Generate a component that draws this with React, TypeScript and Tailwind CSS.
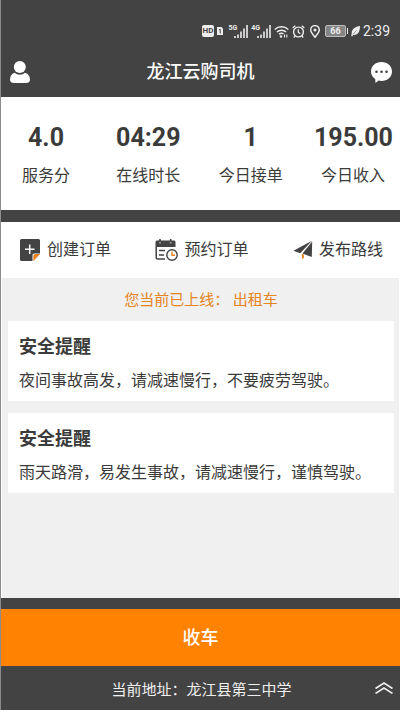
const stats = [
	{ label: "服务分", value: "4.0" },
	{ label: "在线时长", value: "04:29" },
	{ label: "今日接单", value: "1" },
	{ label: "今日收入", value: "195.00" },
];

const actions = [
	{ label: "创建订单", icon: CreateIcon },
	{ label: "预约订单", icon: BookingIcon },
	{ label: "发布路线", icon: RouteIcon },
];

const notices = [
	{ title: "安全提醒", text: "夜间事故高发，请减速慢行，不要疲劳驾驶。" },
	{ title: "安全提醒", text: "雨天路滑，易发生事故，请减速慢行，谨慎驾驶。" },
];

function CreateIcon() {
	return (
		<svg className="mr-[7px] h-[22px] w-5" viewBox="0 0 20 22" aria-hidden="true">
			<path d="M1.5 0h17A1.5 1.5 0 0 1 20 1.5V15l-6.500 7H1.5A1.5 1.5 0 0 1 0 20.5v-19A1.5 1.5 0 0 1 1.5 0Z" fill="#434343" />
			<path d="M12.500 22v-6a1.500 1.500 0 0 1 1.500-1.500h6V15l-6.500 7Z" fill="#fff" />
			<path d="M13.300 22v-5a2 2 0 0 1 2-2H20Z" fill="#e8811d" />
			<path d="M9.700 5.500V15M5 10.200h9.500" stroke="#fff" strokeWidth="1.5" />
		</svg>
	);
}

function BookingIcon() {
	return (
		<svg className="mr-[6px] h-[22px] w-[23px]" viewBox="0 0 23 22" aria-hidden="true">
			<path d="M2 1.5h17A1.5 1.5 0 0 1 20.5 3v5H.5V3A1.5 1.5 0 0 1 2 1.5Z" fill="#434343" />
			<path d="M5 0v3.5M15.700 0v3.500" stroke="#434343" strokeWidth="1.6" />
			<path d="M4 3.800h2M14.700 3.800h2" stroke="#fff" strokeWidth="0.7" />
			<path d="M1.2 8v10.5A1.5 1.5 0 0 0 2.700 20H10" fill="none" stroke="#434343" strokeWidth="1.5" />
			<path d="M4 11.500h6M4 16h5" stroke="#434343" strokeWidth="1.4" />
			<circle cx="17" cy="16" r="5.2" fill="#fff" stroke="#434343" strokeWidth="1.4" />
			<path d="M17 12.800v3.400h3" fill="none" stroke="#e8811d" strokeWidth="1.4" />
		</svg>
	);
}

function RouteIcon() {
	return (
		<svg className="mr-[6px] h-5 w-5" viewBox="0 0 20 20" aria-hidden="true">
			<path d="M19 .700.500 10.700l6.700 2.500Z" fill="#434343" />
			<path d="M19.200 1.500 9.500 13.600l9.300 3.300Z" fill="#434343" />
			<path d="M8.700 13.800l2.200.800v3.200l-1.800 1.500Z" fill="#e8811d" />
		</svg>
	);
}

function Signal({ label }: { label: string }) {
	return (
		<div className="flex h-[13px] items-start">
			<span className="text-[7px] leading-[7px] font-bold">{label}</span>
			<svg className="-ml-[3px] h-[13px] w-[14px]" viewBox="0 0 14 13" aria-hidden="true">
				<path
					d="M1 13v-2M4 13V9.500M7 13V6.500M10 13V3.500M13 13V0"
					stroke="currentColor"
					strokeWidth="1.6"
				/>
			</svg>
		</div>
	);
}

function StatusBar() {
	return (
		<div className="flex h-8 items-center justify-end gap-[3px] pr-[10px] text-[#ededed]">
			<span className="rounded-xs bg-[#ededed] px-px text-[8px] leading-3 font-bold text-[#434343]">
				HD
			</span>
			<svg className="mr-[2px] h-2 w-[6px]" viewBox="0 0 6 8" aria-hidden="true">
				<path d="M0 0h4.500L6 1.500V8H0Z" fill="currentColor" />
				<path d="M2 3l1.200-.800V6.500" fill="none" stroke="#434343" />
			</svg>
			<Signal label="5G" />
			<Signal label="4G" />
			<svg className="h-[13px] w-[15px]" viewBox="0 0 15 13" fill="none" stroke="currentColor" aria-hidden="true">
				<path d="M.700 4.500a10 10 0 0 1 13.600 0M2.900 7a7 7 0 0 1 9.200 0M5 9.300a4 4 0 0 1 4.500-.500" strokeWidth="1.5" />
				<circle cx="7" cy="11.500" r="1.2" fill="currentColor" stroke="none" />
				<path d="M10.500 9.500v3M12.800 9.500v3" strokeWidth="1.1" />
			</svg>
			<svg className="h-[13px] w-[13px]" viewBox="0 0 13 13" fill="none" stroke="currentColor" aria-hidden="true">
				<circle cx="6.500" cy="7" r="4.900" strokeWidth="1.4" />
				<path d="M6.300 4.200v3l2 1.600M.700 3 3.300.700M12.300 3 9.700.700M3 11l-1.200 1.500M10 11l1.200 1.500" strokeWidth="1.3" />
			</svg>
			<svg className="mx-[2px] h-[13px] w-[10px]" viewBox="0 0 10 13" aria-hidden="true">
				<path d="M5 12.300C3.500 10 .700 7.500.700 4.900a4.300 4.300 0 0 1 8.600 0C9.300 7.500 6.500 10 5 12.300Z" fill="none" stroke="currentColor" strokeWidth="1.4" />
				<circle cx="5" cy="5" r="1.5" fill="currentColor" />
			</svg>
			<div className="flex items-center">
				<span className="h-3 w-[21px] rounded-xs border border-[#bdbdbd] bg-[#858585] text-center text-[9px] leading-[10px] font-bold">
					66
				</span>
				<span className="ml-px h-[6px] w-px bg-[#ededed]" />
			</div>
			<svg className="h-[11px] w-[9px]" viewBox="0 0 9 11" aria-hidden="true">
				<path d="M9 0C4.500.800.500 3 .700 7.300L.200 10l1 .500 1-1.500C7 9.500 9 5.500 9 0Z" fill="currentColor" />
				<path d="M1.800 8.500 5.500 4.500" stroke="#434343" strokeWidth="0.5" />
			</svg>
			<time className="text-sm">2:39</time>
		</div>
	);
}

export default function App() {
	return (
		<div className="flex min-h-screen flex-col border-l border-[#8c8c8c] bg-[#434343] font-['Roboto','Noto_Sans_CJK_SC',sans-serif] text-[#3b3b3b]">
			<header className="pt-[15px] text-white">
				<StatusBar />
				<div className="flex h-[50px] items-center justify-between pr-2 pl-[9px]">
					<button aria-label="个人中心">
						<svg className="h-[22px] w-5" viewBox="0 0 20 22" fill="currentColor" aria-hidden="true">
							<circle cx="9.800" cy="6" r="6" />
							<path d="M4.500 11.800a8.500 8.500 0 0 0 10.600 0c3 .800 4.900 3.600 4.900 6.700 0 2.500-1.500 3.500-4 3.500H4c-2.500 0-4-1-4-3.500 0-3.100 1.700-5.900 4.500-6.700Z" />
						</svg>
					</button>
					<h1 className="text-lg leading-6 font-medium">龙江云购司机</h1>
					<button aria-label="消息">
						<svg className="h-[21px] w-[21px]" viewBox="0 0 21 21" aria-hidden="true">
							<path d="M10.500 0C16.500 0 21 4 21 9.500S16.500 19 10.500 19c-1 0-2-.100-2.900-.400L4.500 21l-.300-4C1.600 15.300 0 12.600 0 9.500 0 4 4.500 0 10.500 0Z" fill="currentColor" />
							<g fill="#434343">
								<circle cx="5.500" cy="9.700" r="1.300" />
								<circle cx="10.500" cy="9.700" r="1.300" />
								<circle cx="15.500" cy="9.700" r="1.300" />
							</g>
						</svg>
					</button>
				</div>
			</header>

			<dl className="flex h-[113px] items-center justify-between bg-white pt-1 pr-2 pl-[6px] text-center">
				{stats.map((s) => (
					<div key={s.label} className="flex w-[78px] flex-col-reverse gap-2">
						<dt className="text-base leading-7">{s.label}</dt>
						<dd className="text-[25px] leading-8 font-bold">{s.value}</dd>
					</div>
				))}
			</dl>

			<nav className="mt-3 flex h-14 items-center justify-between bg-white pr-[17px] pl-[19px]">
				{actions.map(({ label, icon: Icon }) => (
					<button key={label} className="flex items-center text-base leading-6">
						<Icon />
						{label}
					</button>
				))}
			</nav>

			<main className="flex-1 border-x border-white bg-[#f0f0f0] pr-[5px] pl-[6px]">
				<p className="pt-3 pb-[11px] text-center text-[15px] leading-5 text-[#e58420]">
					您当前已上线： 出租车
				</p>
				<div className="space-y-3">
					{notices.map((n) => (
						<section key={n.text} className="bg-white px-[11px] pt-3 pb-2">
							<h2 className="text-lg leading-7 font-bold">{n.title}</h2>
							<p className="mt-2 text-base leading-6">{n.text}</p>
						</section>
					))}
				</div>
			</main>

			<button className="mt-[11px] h-[57px] w-full bg-[#ff8200] pt-px text-lg leading-6 font-medium text-white">
				收车
			</button>

			<footer className="flex h-11 items-center pr-[7px] pl-[27px] text-[#f0f0f0]">
				<p className="flex-1 pt-1 text-center text-[15px] leading-5">
					当前地址：龙江县第三中学
				</p>
				<button aria-label="展开">
					<svg className="h-3 w-[18px]" viewBox="0 0 18 12" fill="none" stroke="currentColor" strokeWidth="1.5" aria-hidden="true">
						<path d="M.500 6.500 9 1l8.500 5.500M.500 11.500 9 6l8.500 5.500" />
					</svg>
				</button>
			</footer>
		</div>
	);
}
